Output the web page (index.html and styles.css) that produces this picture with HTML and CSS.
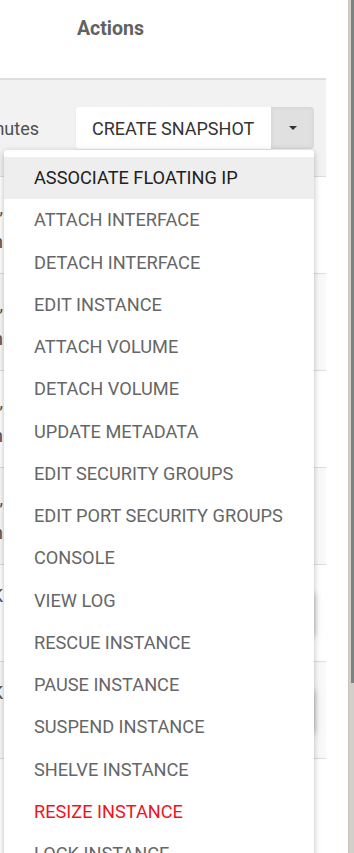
FILE: index.html
```html
<!DOCTYPE html>
<html>
<head>
<meta charset="utf-8">
<link rel="stylesheet" href="styles.css">
</head>
<body>
<div class="page">
  <div class="content">
    <div class="table">
      <div class="thead">
        <div class="cell age"></div>
        <div class="cell actions th">Actions</div>
      </div>
      <div class="row row--hover">
        <div class="cell age"><span class="age-text">Created 5 minutes</span></div>
        <div class="cell actions">
          <div class="btn-group">
            <button class="btn btn-main">CREATE SNAPSHOT</button>
            <button class="btn btn-caret"><span class="caret"></span></button>
            <ul class="menu">
              <li class="item item--active">ASSOCIATE FLOATING IP</li>
              <li class="item">ATTACH INTERFACE</li>
              <li class="item">DETACH INTERFACE</li>
              <li class="item">EDIT INSTANCE</li>
              <li class="item">ATTACH VOLUME</li>
              <li class="item">DETACH VOLUME</li>
              <li class="item">UPDATE METADATA</li>
              <li class="item">EDIT SECURITY GROUPS</li>
              <li class="item">EDIT PORT SECURITY GROUPS</li>
              <li class="item">CONSOLE</li>
              <li class="item">VIEW LOG</li>
              <li class="item">RESCUE INSTANCE</li>
              <li class="item">PAUSE INSTANCE</li>
              <li class="item">SUSPEND INSTANCE</li>
              <li class="item">SHELVE INSTANCE</li>
              <li class="item item--danger">RESIZE INSTANCE</li>
              <li class="item">LOCK INSTANCE</li>
            </ul>
          </div>
        </div>
      </div>
      <div class="row">
        <div class="cell age age--wrap"><span class="age-text">1 month,</span><span class="age-text">2 weeks, 1 min</span></div>
        <div class="cell actions"></div>
      </div>
      <div class="row row--odd">
        <div class="cell age age--wrap"><span class="age-text">1 month,</span><span class="age-text">3 weeks, 2 min</span></div>
        <div class="cell actions"></div>
      </div>
      <div class="row">
        <div class="cell age age--wrap"><span class="age-text">2 months,</span><span class="age-text">1 week, 4 min</span></div>
        <div class="cell actions"></div>
      </div>
      <div class="row row--odd">
        <div class="cell age age--wrap"><span class="age-text">3 months,</span><span class="age-text">2 weeks, 5 min</span></div>
        <div class="cell actions"></div>
      </div>
      <div class="row">
        <div class="cell age age--wrap"><span class="age-text">BLOCK</span><span class="age-text">&nbsp;</span></div>
        <div class="cell actions"><span class="btn-raised"></span></div>
      </div>
      <div class="row row--odd">
        <div class="cell age age--wrap"><span class="age-text">BLOCK</span><span class="age-text">&nbsp;</span></div>
        <div class="cell actions"><span class="btn-raised"></span></div>
      </div>
      <div class="row">
        <div class="cell age age--wrap"><span class="age-text">&nbsp;</span><span class="age-text">&nbsp;</span></div>
        <div class="cell actions"></div>
      </div>
    </div>
  </div>
  <div class="scrollbar"><div class="thumb"></div></div>
</div>
</body>
</html>
```

FILE: styles.css
```css
html, body {
  margin: 0;
  padding: 0;
  height: 853px;
  overflow: hidden;
  background: #ffffff;
  font-family: Roboto, "Liberation Sans", sans-serif;
}

.page {
  display: flex;
  height: 853px;
}

.content {
  flex: 1;
  overflow: hidden;
  position: relative;
}

.table {
  width: 326px;
}

.thead {
  display: flex;
  height: 78px;
  border-bottom: 2px solid #dedede;
  align-items: flex-start;
}

.row {
  display: flex;
  height: 96px;
  border-bottom: 1px solid #dddddd;
  align-items: center;
  background: #ffffff;
}

.row--hover {
  background: #f2f2f2;
}

.row--odd {
  background: #f9f9f9;
}

.cell {
  box-sizing: border-box;
}

.age {
  width: 68px;
  flex: none;
  display: flex;
  justify-content: flex-end;
  padding-right: 29px;
  font-size: 18px;
  color: #4f4f4f;
  white-space: nowrap;
}

.age--wrap {
  flex-direction: column;
  align-items: flex-end;
  justify-content: center;
  padding-right: 65px;
  line-height: 34px;
}

.actions {
  flex: 1;
  padding: 0 12px 0 8px;
  display: flex;
  justify-content: flex-start;
  align-items: center;
}

.th {
  font-weight: 700;
  font-size: 19.5px;
  line-height: 24px;
  color: #626262;
  padding-left: 9px;
  padding-top: 17px;
}

.btn-group {
  position: relative;
  display: flex;
  height: 42px;
}

.btn {
  font-family: Roboto, "Liberation Sans", sans-serif;
  border: none;
  margin: 0;
  font-size: 18px;
  cursor: pointer;
}

.btn-main {
  width: 195px;
  height: 42px;
  background: #ffffff;
  color: #333333;
  border-radius: 3px 0 0 3px;
  padding: 0 10px 0 16px;
  text-align: left;
  white-space: nowrap;
  box-shadow: 0 1px 2px rgba(0, 0, 0, 0.06);
}

.btn-caret {
  width: 43px;
  height: 42px;
  background: #e0e0e0;
  border-radius: 0 4px 4px 0;
  box-shadow: inset 0 0 4px rgba(0, 0, 0, 0.08);
  display: flex;
  align-items: center;
  justify-content: center;
  padding: 0;
}

.caret {
  width: 0;
  height: 0;
  border-left: 4px solid transparent;
  border-right: 4px solid transparent;
  border-top: 4px solid #333333;
}

.btn-raised {
  display: block;
  width: 238px;
  height: 44px;
  background: #ffffff;
  border-radius: 3px;
  box-shadow: 0 2px 5px rgba(0, 0, 0, 0.2), 0 2px 10px rgba(0, 0, 0, 0.14);
}

.menu {
  position: absolute;
  top: 43px;
  right: 0;
  width: 310px;
  margin: 0;
  padding: 7px 0 0;
  list-style: none;
  background: #ffffff;
  border-radius: 3px;
  box-shadow: 0 2px 5px rgba(0, 0, 0, 0.16), 0 2px 10px rgba(0, 0, 0, 0.12);
  z-index: 10;
}

.item {
  height: 42.25px;
  line-height: 42.25px;
  padding-left: 30px;
  font-size: 18.2px;
  color: #666666;
  white-space: nowrap;
}

.item--active {
  background: #eeeeee;
  color: #212121;
}

.item--danger {
  color: #f0141e;
}

.scrollbar {
  width: 6px;
  flex: none;
  height: 853px;
  background: #d2cfcb;
  border-left: 1px solid #c6c2be;
  box-sizing: border-box;
}

.thumb {
  margin-left: 2px;
  width: 3px;
  height: 683px;
  background: #7d8282;
}
```
